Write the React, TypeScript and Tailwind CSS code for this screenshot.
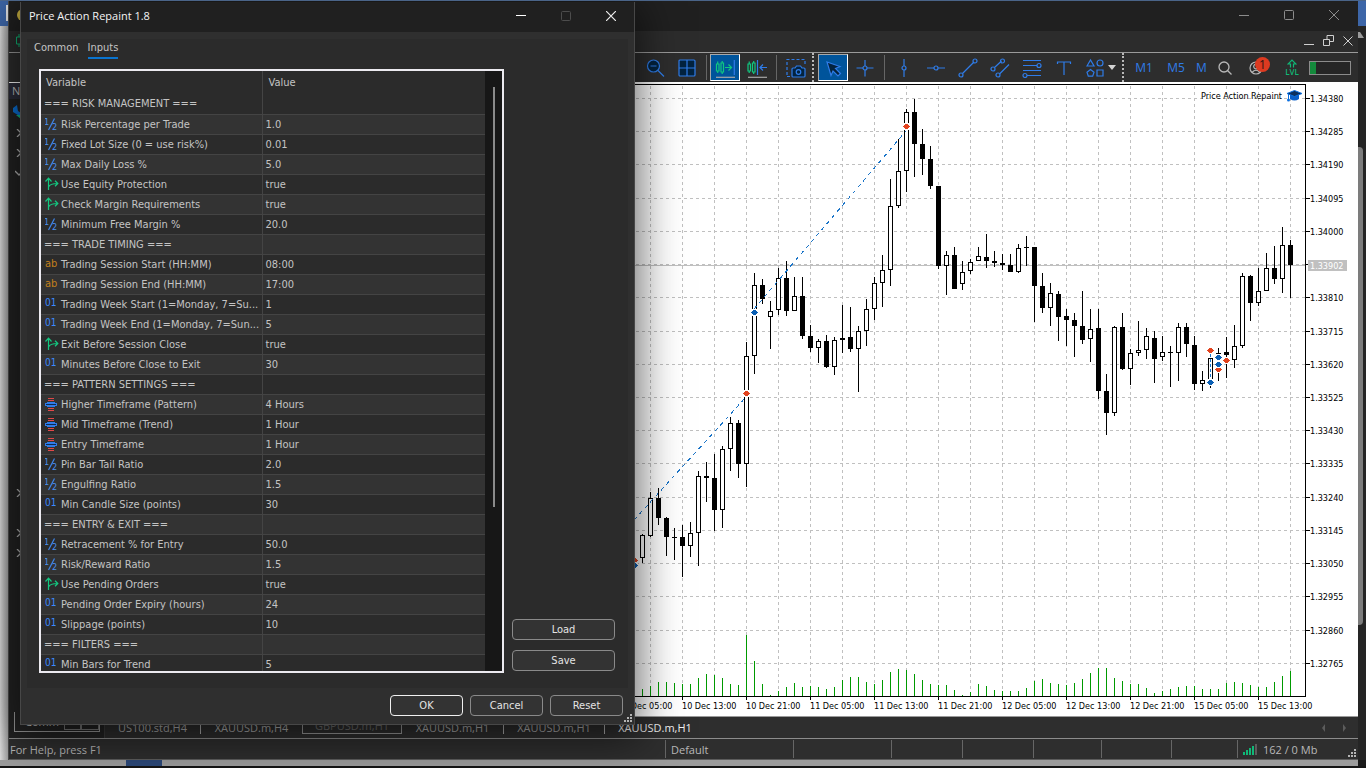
import React from 'react';

type Kind = 'section' | 'double' | 'bool' | 'string' | 'int' | 'enum';

const INPUTS: [Kind, string, string][] = [
  ['section', '=== RISK MANAGEMENT ===', ''],
  ['double', 'Risk Percentage per Trade', '1.0'],
  ['double', 'Fixed Lot Size (0 = use risk%)', '0.01'],
  ['double', 'Max Daily Loss %', '5.0'],
  ['bool', 'Use Equity Protection', 'true'],
  ['bool', 'Check Margin Requirements', 'true'],
  ['double', 'Minimum Free Margin %', '20.0'],
  ['section', '=== TRADE TIMING ===', ''],
  ['string', 'Trading Session Start (HH:MM)', '08:00'],
  ['string', 'Trading Session End (HH:MM)', '17:00'],
  ['int', 'Trading Week Start (1=Monday, 7=Su...', '1'],
  ['int', 'Trading Week End (1=Monday, 7=Sun...', '5'],
  ['bool', 'Exit Before Session Close', 'true'],
  ['int', 'Minutes Before Close to Exit', '30'],
  ['section', '=== PATTERN SETTINGS ===', ''],
  ['enum', 'Higher Timeframe (Pattern)', '4 Hours'],
  ['enum', 'Mid Timeframe (Trend)', '1 Hour'],
  ['enum', 'Entry Timeframe', '1 Hour'],
  ['double', 'Pin Bar Tail Ratio', '2.0'],
  ['double', 'Engulfing Ratio', '1.5'],
  ['int', 'Min Candle Size (points)', '30'],
  ['section', '=== ENTRY & EXIT ===', ''],
  ['double', 'Retracement % for Entry', '50.0'],
  ['double', 'Risk/Reward Ratio', '1.5'],
  ['bool', 'Use Pending Orders', 'true'],
  ['int', 'Pending Order Expiry (hours)', '24'],
  ['int', 'Slippage (points)', '10'],
  ['section', '=== FILTERS ===', ''],
  ['int', 'Min Bars for Trend', '5'],
];

// filled, body top, body bottom, wick top, wick bottom; one bar every 8px from x = 642
const CANDLES: [number, number, number, number, number][] = [
  [0, 535, 558, 534, 563], [0, 498, 536, 492, 537], [1, 498, 518, 488, 525], [1, 518, 537, 517, 556],
  [1, 537, 538, 528, 560], [1, 537, 546, 525, 577], [0, 533, 546, 522, 557], [0, 476, 533, 471, 566],
  [1, 476, 478, 462, 502], [1, 478, 510, 454, 531], [0, 449, 510, 446, 528], [0, 423, 449, 417, 471],
  [1, 423, 464, 420, 478], [0, 356, 464, 342, 487], [0, 285, 356, 273, 374], [1, 285, 299, 279, 304],
  [0, 311, 317, 301, 349], [0, 278, 310, 268, 315], [1, 278, 311, 261, 316], [0, 296, 311, 277, 311],
  [1, 296, 336, 277, 339], [1, 336, 348, 325, 352], [0, 341, 348, 339, 363], [1, 341, 367, 335, 368],
  [0, 340, 367, 337, 375], [0, 338, 340, 305, 353], [1, 337, 349, 307, 352], [0, 331, 349, 326, 392],
  [0, 309, 331, 299, 346], [0, 283, 309, 277, 320], [0, 270, 283, 255, 307], [0, 206, 270, 179, 286],
  [0, 171, 206, 139, 208], [0, 112, 171, 109, 192], [1, 112, 144, 99, 177], [1, 144, 159, 129, 175],
  [1, 159, 186, 146, 189], [1, 186, 266, 186, 269], [0, 255, 266, 251, 295], [1, 255, 289, 247, 289],
  [0, 272, 284, 261, 290], [0, 262, 271, 259, 274], [0, 256, 261, 247, 261], [1, 257, 261, 234, 268],
  [1, 261, 263, 251, 267], [1, 263, 265, 254, 270], [1, 265, 272, 254, 272], [0, 248, 272, 244, 273],
  [1, 247, 248, 236, 266], [1, 247, 286, 247, 322], [1, 286, 308, 273, 313], [0, 293, 308, 283, 326],
  [1, 294, 317, 291, 341], [1, 316, 320, 309, 346], [1, 320, 326, 313, 357], [1, 326, 340, 291, 344],
  [0, 329, 339, 309, 362], [1, 328, 391, 309, 399], [1, 391, 413, 374, 435], [0, 327, 413, 326, 416],
  [1, 327, 369, 313, 370], [0, 353, 369, 349, 385], [0, 350, 353, 321, 356], [0, 336, 350, 328, 359],
  [1, 338, 359, 331, 383], [0, 352, 357, 336, 361], [1, 352, 353, 346, 387], [0, 327, 353, 323, 381],
  [1, 327, 344, 323, 357], [1, 345, 384, 336, 390], [0, 380, 384, 371, 391], [0, 358, 380, 358, 388],
  [1, 353, 355, 348, 381], [1, 352, 355, 337, 378], [0, 346, 360, 325, 368], [0, 276, 346, 273, 348],
  [1, 276, 303, 275, 321], [0, 291, 303, 268, 306], [0, 268, 291, 253, 291], [1, 268, 279, 246, 284],
  [0, 245, 279, 227, 293], [1, 245, 265, 240, 298],
];

// top of each volume bar, from x = 634
const VOLUMES = [
  690, 689, 686, 682, 682, 683, 684, 684, 678, 674, 675, 678, 684, 685, 635, 661, 684, 695, 691, 687, 683,
  687, 686, 687, 689, 687, 680, 677, 677, 682, 684, 680, 672, 669, 670, 674, 680, 684, 685, 685, 690, 695,
  692, 684, 686, 690, 691, 691, 691, 688, 681, 679, 683, 684, 685, 683, 679, 673, 668, 668, 678, 681, 684,
  684, 688, 693, 691, 689, 687, 686, 686, 689, 689, 689, 683, 682, 683, 685, 687, 687, 682, 676, 671,
];

const PRICES: [number, string][] = [
  [98, '1.34380'], [131, '1.34285'], [164, '1.34190'], [198, '1.34095'], [231, '1.34000'], [264, ''],
  [297, '1.33810'], [331, '1.33715'], [364, '1.33620'], [397, '1.33525'], [430, '1.33430'], [463, '1.33335'],
  [497, '1.33240'], [530, '1.33145'], [563, '1.33050'], [596, '1.32955'], [630, '1.32860'], [663, '1.32765'],
];

const DATES = [
  '10 Dec 05:00', '10 Dec 13:00', '10 Dec 21:00', '11 Dec 05:00', '11 Dec 13:00', '11 Dec 21:00',
  '12 Dec 05:00', '12 Dec 13:00', '12 Dec 21:00', '15 Dec 05:00', '15 Dec 13:00',
];

const RED = '#e2431e';
const BLUE = '#0a5fb4';

const DEALS: [number, number, string][] = [
  [634, 560, RED], [634, 565, BLUE], [746, 393, RED], [754, 312, BLUE], [906, 126, RED],
  [1210, 350, RED], [1210, 382, BLUE], [1218, 369, RED], [1218, 364, BLUE], [1218, 357, BLUE], [1226, 360, RED],
];

const Deal: React.FC<{ x: number; y: number; color: string }> = ({ x, y, color }) => (
  <g>
    <rect x={x - 3} y={y - 3} width="7" height="7" fill="#fff" />
    <path
      d={`M${x - 3} ${y}h7v1h-7zM${x - 2} ${y - 1}h5v3h-5zM${x - 1} ${y - 2}h3v5h-3z`}
      fill={color}
    />
  </g>
);

const Chart: React.FC = () => (
  <svg
    width="740"
    height="634"
    viewBox="618 83 740 634"
    className="shrink-0 font-['DejaVu_Sans_Condensed','DejaVu_Sans',sans-serif] text-[9px]"
    shapeRendering="crispEdges"
    role="img"
    aria-label="Price chart"
  >
    <g stroke="#c0c0c0" strokeDasharray="3 3">
      {Array.from({ length: 21 }, (_, i) => 650 + i * 32).map((x) => (
        <line key={x} x1={x + 0.5} x2={x + 0.5} y1="86" y2="696" />
      ))}
      {PRICES.map(([y]) => (
        <line key={y} x1="618" x2="1305" y1={y + 0.5} y2={y + 0.5} />
      ))}
    </g>
    <rect x="618" y="265" width="687" height="1" fill="#c0c0c0" />

    {VOLUMES.map((y, i) => (
      <rect key={i} x={634 + i * 8} y={y} width="1" height={696 - y} fill="#009a00" />
    ))}

    {CANDLES.map(([filled, top, bottom, high, low], i) => {
      const x = 642 + i * 8;
      return (
        <g key={x}>
          <rect x={x} y={high} width="1" height={low - high} />
          <rect x={x - 2} y={top} width="5" height={Math.max(bottom - top, 1)} />
          {!filled && <rect x={x - 1} y={top + 1} width="3" height={Math.max(bottom - top - 2, 0)} fill="#fff" />}
        </g>
      );
    })}
    <rect x="634" y="548" width="1" height="10" />

    <g stroke="#1a74c8" strokeDasharray="4 4" fill="none">
      <path d="M634 520L746 397" />
      <path d="M754 309L906 131" />
    </g>
    <g stroke="#1a74c8" strokeDasharray="3 2" fill="none">
      <path d="M1210.5 354V382" />
      <path d="M1218.5 357V369" />
      <path d="M1218 357L1226 360" />
    </g>
    {DEALS.map(([x, y, color]) => (
      <Deal key={`${x}-${y}`} x={x} y={y} color={color} />
    ))}

    <rect x="618" y="84" width="688" height="1" />
    <rect x="1305" y="84" width="1" height="613" />
    <rect x="618" y="696" width="688" height="1" />

    {PRICES.map(([y, label]) => (
      <g key={y}>
        <rect x="1306" y={y} width="4" height="1" />
        <text x="1310" y={y + 4}>{label}</text>
      </g>
    ))}
    <rect x="1308" y="260" width="39" height="11" fill="#c0c0c0" />
    <text x="1310" y="269" fill="#fff">1.33902</text>

    {DATES.map((label, i) => (
      <g key={label}>
        <rect x={618 + i * 64} y="697" width="1" height="3" />
        <text x={618 + i * 64} y="709">{label}</text>
      </g>
    ))}

    <text x="1282" y="99" textAnchor="end">Price Action Repaint</text>
    <g shapeRendering="auto">
      <path d="M1290 95v4q4.500 3 9 0v-4z" fill="#0a5fc8" />
      <path d="M1287 93.500L1294.500 90.500L1302 93.500L1294.500 96.500z" fill="#0b2f5c" stroke="#0b6fe0" />
      <path d="M1288.500 94v6" stroke="#0b6fe0" />
      <circle cx="1288.500" cy="100" r="1.500" fill="#0b6fe0" />
    </g>
  </svg>
);

const KindIcon: React.FC<{ kind: Kind }> = ({ kind }) => {
  switch (kind) {
    case 'double':
      return (
        <svg width="14" height="15" viewBox="0 0 14 15" fill="#4a90f0" className="text-[9px]">
          <text x="-1" y="8">1</text>
          <path d="M9.500 1.500L3.500 13" stroke="#3f86ea" strokeWidth="1.2" />
          <text x="7" y="13">2</text>
        </svg>
      );
    case 'int':
      return <span className="pb-0.5 text-[10px] text-[#3b8aff]">01</span>;
    case 'string':
      return <span className="pb-0.5 text-[11px] text-[#c07f1c]">ab</span>;
    case 'bool':
      return (
        <svg width="14" height="15" viewBox="0 0 14 15" fill="none" stroke="#14c880" strokeWidth="1.2">
          <path d="M3.500 13V1.500M.5 4.500L3.500 1.200L6.500 4.500M3.500 10Q5 6.500 12.500 6.500M10 3.800L12.800 6.500L10 9.200" />
        </svg>
      );
    case 'enum':
      return (
        <svg width="12" height="13" viewBox="0 0 12 13" shapeRendering="crispEdges">
          <path d="M3 0h6v1H3zM3 2h6v1H3zM3 10h6v1H3zM3 12h6v1H3z" fill="#e04848" />
          <path d="M2 4h8v1H2zM0 5h12v3H0zM2 8h8v1H2z" fill="#2f7ce8" />
          <path d="M1 6h10v1H1z" fill="#10294f" />
        </svg>
      );
    default:
      return null;
  }
};

const DialogButton: React.FC<{ label: string; primary?: boolean }> = ({ label, primary }) => (
  <button
    type="button"
    className={`h-[21px] w-full rounded border bg-[#333333] text-[11px] leading-none text-[#e4e4e4] ${primary ? 'border-[#f0f0f0]' : 'border-[#8a8a8a]'}`}
  >
    {label}
  </button>
);

const Grip: React.FC = () => (
  <svg width="8" height="8" viewBox="0 0 8 8" fill="#b4b4b4" shapeRendering="crispEdges">
    <path d="M6 0h2v2H6zM3 3h2v2H3zM6 3h2v2H6zM0 6h2v2H0zM3 6h2v2H3zM6 6h2v2H6z" />
  </svg>
);

const InputsDialog: React.FC = () => (
  <div
    role="dialog"
    aria-label="Price Action Repaint 1.8"
    className="absolute top-px bottom-[43px] left-[20px] flex w-[615px] flex-col border border-[#474747] border-t-0 bg-[#2f2f2f] font-['DejaVu_Sans_Condensed','DejaVu_Sans',sans-serif] text-[11px] text-[#c4c4c4] shadow-[0_8px_40px_4px_rgba(0,0,0,0.6)]"
  >
    <header className="flex h-[30px] shrink-0 items-center bg-[#202020] pb-0.5 pl-2 font-['Open_Sans',sans-serif] text-[11px] text-[#f4f4f4]">
      <h1 className="flex-1">Price Action Repaint 1.8</h1>
      <button type="button" aria-label="Minimize" className="flex w-[45px] justify-center">
        <svg width="10" height="10" viewBox="0 0 10 10" stroke="#fff"><path d="M0 4.500h10" /></svg>
      </button>
      <button type="button" aria-label="Maximize" disabled className="flex w-[45px] justify-center">
        <svg width="10" height="10" viewBox="0 0 10 10" stroke="#4c4c4c" fill="none"><rect x=".5" y=".5" width="9" height="9" rx="1" /></svg>
      </button>
      <button type="button" aria-label="Close" className="flex w-[46px] justify-center">
        <svg width="10" height="10" viewBox="0 0 10 10" stroke="#eee" strokeWidth="1.2"><path d="M0 0l10 10M10 0L0 10" /></svg>
      </button>
    </header>

    <div className="mx-1.5 mt-[7px] flex min-h-0 flex-1 flex-col bg-[#2b2b2b] pb-[15px]">
      <nav className="flex h-[30px] shrink-0 items-start gap-[9px] pl-[7px]">
        <button type="button" className="h-[18px]">Common</button>
        <button type="button" className="h-5 border-b-2 border-[#0a74cf]">Inputs</button>
      </nav>
      <div className="flex min-h-0 flex-1 gap-2 pr-[13px] pl-3">
        <div className="flex min-w-0 flex-1 overflow-hidden border-2 border-[#eceaf0]">
          <table className="h-min w-full table-fixed border-collapse">
            <thead>
              <tr className="h-[23px] text-left">
                <th className="w-[221px] border-r border-[#444444] pt-0.5 pl-[5px] font-normal">Variable</th>
                <th className="pt-0.5 pl-1.5 font-normal">Value</th>
              </tr>
            </thead>
            <tbody>
              {INPUTS.map(([kind, name, value]) => (
                <tr key={name} className="h-5 border-b border-[#444444] odd:bg-[#2b2b2b] even:bg-[#333333]">
                  <td className="border-r border-[#444444] p-0">
                    <div className="flex h-[19px] items-center overflow-hidden pl-[3px] leading-none whitespace-nowrap">
                      {kind !== 'section' && (
                        <span className="flex w-[17px] shrink-0 items-center pl-px leading-none"><KindIcon kind={kind} /></span>
                      )}
                      {name}
                    </div>
                  </td>
                  <td className="p-0">
                    <div className="flex h-[19px] items-center pl-[3px] leading-none">{value}</div>
                  </td>
                </tr>
              ))}
            </tbody>
          </table>
          <div className="flex w-[17px] shrink-0 justify-center bg-[#171717] pt-4">
            <div className="h-[72%] w-0.5 bg-[#8a8a8a]" />
          </div>
        </div>
        <div className="flex w-[103px] flex-col justify-end gap-2.5 pb-0.5">
          <DialogButton label="Load" />
          <DialogButton label="Save" />
        </div>
      </div>
    </div>

    <footer className="flex h-9 shrink-0 justify-end gap-[7px] pt-[7px]">
      <div className="w-[73px]"><DialogButton label="OK" primary /></div>
      <div className="w-[73px]"><DialogButton label="Cancel" /></div>
      <div className="w-[73px]"><DialogButton label="Reset" /></div>
      <div className="-ml-1.5 flex w-2.5 items-end pb-0.5"><Grip /></div>
    </footer>
  </div>
);

const Tool: React.FC<{ label: string; active?: boolean; children: React.ReactNode }> = ({ label, active, children }) => (
  <button
    type="button"
    aria-label={label}
    className={`flex h-[27px] shrink-0 items-center justify-center ${active ? 'w-[30px] border border-t-[#a8a8a8] border-r-white border-b-white border-l-[#a8a8a8] bg-[#00549b]' : 'w-8'}`}
  >
    <svg width="20" height="20" viewBox="0 0 20 20" fill="none" stroke="#2f7ce8" strokeWidth="1.2">
      {children}
    </svg>
  </button>
);

const Divider: React.FC = () => <span className="mx-[3px] h-[25px] w-px shrink-0 bg-[#666666]" />;
const Dots: React.FC = () => <span className="h-full shrink-0 border-l-2 border-dotted border-[#b8b8b8]" />;

const Toolbar: React.FC = () => (
  <div className="flex h-[31px] shrink-0 items-center justify-end overflow-hidden border-t border-b border-t-[#9a9a9a] border-b-white bg-[#2d2d2d] pr-[7px] font-['Open_Sans',sans-serif] text-xs text-[#2f7ce8]">
    <Tool label="Zoom out">
      <circle cx="8.500" cy="8" r="6" fill="#03233f" />
      <path d="M5.500 8h6M13 12.500l6 6" />
    </Tool>
    <Tool label="Tile windows">
      <rect x="2" y="2" width="16" height="16" rx="1" fill="#03233f" />
      <path d="M10 2v16M2 10h16" />
    </Tool>
    <Divider />
    <Tool label="Auto scroll" active>
      <path d="M1.500 6h2.500v7H1.500zM2.700 3.500V6M2.700 13v2M6 5h2.500v9H6zM7.200 3v2M7.200 14v2M10 9.500h6.500M13.500 6.500l3 3-3 3" stroke="#10c880" />
      <path d="M19.300 2v15" />
      <path d="M1 19.300h19" stroke="#a8a8a8" />
    </Tool>
    <span className="w-px shrink-0" />
    <Tool label="Chart shift">
      <path d="M1 6h2.500v7H1zM2.200 3.500V6M2.200 13v2M5.500 5H8v9H5.500zM6.700 3v2M6.700 14v2" stroke="#10c880" />
      <path d="M10.500 2v15M20 9.500h-7M16 6.500l-3 3 3 3" />
      <path d="M1 19.300h19" stroke="#a8a8a8" />
    </Tool>
    <Divider />
    <Tool label="Screenshot">
      <path d="M1 17V1.500h18V8M1 18.500h4" strokeDasharray="3 2" />
      <path d="M6 11q0-1 1-1h2l1.500-2h4L16 10h2q1 0 1 1v7q0 1-1 1H7q-1 0-1-1z" fill="#03233f" />
      <circle cx="12.500" cy="14" r="2.300" />
    </Tool>
    <Dots />
    <span className="w-1 shrink-0" />
    <Tool label="Cursor" active>
      <path d="M4 4l13 4.500-4.500 2 5 5-2.500 2.500-5-5-2 4.500z" fill="#03233f" />
    </Tool>
    <span className="w-px shrink-0" />
    <Tool label="Crosshair">
      <path d="M10 2v6M10 12v6.500M1.500 10H8M12 10h6.500" />
      <circle cx="10" cy="10" r="2" />
    </Tool>
    <Divider />
    <Tool label="Vertical line">
      <path d="M10 1v7M10 12v7" />
      <circle cx="10" cy="10" r="2" />
    </Tool>
    <Tool label="Horizontal line">
      <path d="M1 10h7M12 10h7" />
      <circle cx="10" cy="10" r="2" />
    </Tool>
    <Tool label="Trendline">
      <path d="M4.500 15.500l11-11" />
      <circle cx="3" cy="17" r="2" />
      <circle cx="17" cy="3" r="2" />
    </Tool>
    <Tool label="Channel">
      <path d="M4.500 9.500l7-6.500M9.500 16L19 6.500" />
      <circle cx="3" cy="11" r="2" />
      <circle cx="12.500" cy="3" r="2" />
      <circle cx="8" cy="17" r="2" />
    </Tool>
    <Tool label="Fibonacci">
      <path d="M1 2.500h18M1 7.500h14M1 12.500h18M5 17.500h14" />
      <circle cx="17" cy="7.500" r="2" />
      <circle cx="3" cy="17.500" r="2" />
    </Tool>
    <Tool label="Text"><path d="M3.500 6V4h13v2M10 4v13" /></Tool>
    <Tool label="Shapes">
      <path d="M1 8l3.500-6L8 8z" />
      <circle cx="14" cy="5" r="3" />
      <path d="M4.500 11.500l3.500 2.700-1.300 4H2.300L1 14.200zM11 12h6v6h-6z" />
    </Tool>
    <svg width="8" height="5" viewBox="0 0 8 5" fill="#d4d4d4" className="-ml-1 shrink-0"><path d="M0 0h8L4 5z" /></svg>
    <span className="w-1.5 shrink-0" />
    <Dots />
    <span className="w-1 shrink-0" />
    <button type="button" className="w-8 shrink-0">M1</button>
    <button type="button" className="w-8 shrink-0">M5</button>
    <button type="button" className="w-4 shrink-0 pl-1 text-left">M</button>
    <button type="button" aria-label="Search" className="flex w-[37px] shrink-0 justify-center pr-1 text-[#b8b8b8]">
      <svg width="14" height="14" viewBox="0 0 14 14" fill="none" stroke="currentColor" strokeWidth="1.3">
        <circle cx="6" cy="6" r="5" />
        <path d="M9.500 9.500l4 4" />
      </svg>
    </button>
    <button type="button" aria-label="Account, 1 notification" className="relative flex w-[30px] shrink-0 justify-start pl-1 text-[#b8b8b8]">
      <svg width="14" height="14" viewBox="0 0 14 14" fill="none" stroke="currentColor" strokeWidth="1.2">
        <circle cx="7" cy="7" r="6" />
        <circle cx="7" cy="5.500" r="2.300" />
        <path d="M3 11.500q4-4.500 8 0" />
      </svg>
      <span className="absolute -top-1 left-[10px] h-[15px] w-[15px] rounded-full bg-[#dd3a20] text-center text-xs leading-[15px] text-[#2b1512]">1</span>
    </button>
    <div className="flex w-[34px] shrink-0 flex-col items-center text-[8px] leading-[8px] font-semibold text-[#10b877]">
      <svg width="10" height="9" viewBox="0 0 10 9" fill="none" stroke="#10b877" strokeWidth="1.2">
        <path d="M3.500 8.500V5H1l4-4 4 4H6.500v3.500" />
      </svg>
      LVL
    </div>
    <div className="h-3.5 w-[42px] shrink-0 border border-[#8c8c8c] bg-[#262626]">
      <div className="h-full w-1.5 bg-[#148a3c]" />
    </div>
  </div>
);

const Chevron: React.FC<{ open?: boolean }> = ({ open }) => (
  <svg width="8" height="8" viewBox="0 0 8 8" fill="none" stroke="#b8b8b8" strokeWidth="1.3" className="my-1.5 shrink-0">
    <path d={open ? 'M0 2l4 4 4-4' : 'M2 0l4 4-4 4'} />
  </svg>
);

const Navigator: React.FC = () => (
  <aside className="flex w-24 shrink-0 flex-col border-r border-[#3c3c3c] bg-[#232323] font-['Open_Sans',sans-serif] text-[11px] text-[#c4c4c4]">
    <div className="h-4 shrink-0 bg-[#2c2d3a] pl-[3px] leading-4">N</div>
    <svg width="16" height="16" viewBox="0 0 16 16" className="mt-1.5 ml-1 shrink-0">
      <path d="M4 0L0 3v4l8 5V8l-3-2z" fill="#0b72d8" />
      <path d="M3 10l5 4h4v-4z" fill="#12b883" />
    </svg>
    <div className="flex shrink-0 flex-col pt-0.5 pl-1.5">
      <Chevron />
      <Chevron />
      <Chevron open />
    </div>
    <div className="flex flex-1 flex-col pt-[300px] pl-1.5">
      <Chevron />
      <div className="h-5" />
      <Chevron />
      <Chevron />
    </div>
    <div className="mb-1.5 ml-[5px] flex h-5 w-[86px] shrink-0 items-start border border-t-0 border-[#9a9a9a] pl-2.5 leading-none">
      <span className="w-10 pt-1">Comm</span>
      <span className="h-[18px] w-[18px] border border-[#7a7a7a]" />
      <span className="h-[18px] w-[18px] border border-[#7a7a7a]" />
    </div>
  </aside>
);

const Terminal: React.FC = () => (
  <div className="flex min-w-0 flex-1 flex-col border-l border-[#4c4c4c] bg-[#2d2d2d]">
    <header className="flex h-[30px] shrink-0 items-center justify-end bg-[#202020] pr-px pb-0.5 text-[#8c8c8c]">
      <span className="mr-auto ml-2 h-3 w-3 rounded-full bg-[#c8b040]" />
      <button type="button" aria-label="Minimize" className="flex w-[45px] justify-center">
        <svg width="10" height="10" viewBox="0 0 10 10" stroke="currentColor"><path d="M0 5.500h10" /></svg>
      </button>
      <button type="button" aria-label="Maximize" className="flex w-[45px] justify-center">
        <svg width="10" height="10" viewBox="0 0 10 10" stroke="currentColor" fill="none"><rect x=".5" y=".5" width="9" height="9" rx="1" /></svg>
      </button>
      <button type="button" aria-label="Close" className="flex w-[46px] justify-center">
        <svg width="10" height="10" viewBox="0 0 10 10" stroke="currentColor"><path d="M0 0l10 10M10 0L0 10" /></svg>
      </button>
    </header>

    <div className="flex h-[21px] shrink-0 items-center justify-end gap-[9px] bg-[#2c2c2c] pr-[5px] pb-0.5 text-[#d0d0d0]">
      <svg width="6" height="13" viewBox="0 0 6 13" fill="none" stroke="#10b877" className="mr-auto ml-[7px]">
        <path d="M.5 3h5v7h-5zM3 0v3M3 10v3" />
      </svg>
      <button type="button" aria-label="Minimize chart">
        <svg width="10" height="10" viewBox="0 0 10 10" stroke="currentColor"><path d="M0 8.500h10" /></svg>
      </button>
      <button type="button" aria-label="Restore chart">
        <svg width="11" height="11" viewBox="0 0 11 11" stroke="currentColor" fill="none"><path d="M.5 4.500h6v6h-6zM4 4.500v-4h6.500v6H6.500" /></svg>
      </button>
      <button type="button" aria-label="Close chart">
        <svg width="10" height="10" viewBox="0 0 10 10" stroke="currentColor"><path d="M.5 .5l9 9M9.500 .5l-9 9" /></svg>
      </button>
    </div>

    <Toolbar />

    <div className="flex min-h-0 flex-1">
      <Navigator />
      <div className="flex min-w-0 flex-1 flex-col">
        <div className="flex min-h-0 flex-1 justify-end overflow-hidden border-b border-[#9a9a9a] bg-white">
          <Chart />
        </div>
        <nav className="flex h-[21px] shrink-0 items-center bg-[#2e2e2e] pr-3 font-['Open_Sans',sans-serif] text-[11px] leading-none text-[#b0b0b0]">
          <button type="button" className="w-[95px]">US100.std,H4</button>
          <span className="h-3 w-px bg-[#b0b0b0]" />
          <button type="button" className="w-[101px]">XAUUSD.m,H4</button>
          <button type="button" className="mb-1 h-[17px] w-[100px] border border-t-0 border-[#9a9a9a] text-[#707070]">GBPUSD.m,H1</button>
          <button type="button" className="w-[101px]">XAUUSD.m,H1</button>
          <span className="h-3 w-px bg-[#b0b0b0]" />
          <button type="button" className="w-[100px]">XAUUSD.m,H1</button>
          <span className="h-3 w-px bg-[#b0b0b0]" />
          <button type="button" className="mr-auto w-[100px] text-[#f0f0f0]">XAUUSD.m,H1</button>
          <svg width="24" height="8" viewBox="0 0 24 8" fill="#5c5c5c"><path d="M3 0v8L0 4zM21 0v8l3-4z" /></svg>
        </nav>
      </div>
    </div>

    <footer className="flex h-[22px] shrink-0 items-center border-t border-b border-t-[#8c8c8c] border-b-[#5c5c5c] bg-[#2e2e2e] font-['Open_Sans',sans-serif] text-[11px] leading-none text-[#b8b8b8]">
      <span className="min-w-0 flex-1 pl-px">For Help, press F1</span>
      <span className="flex h-[18px] w-32 items-center border-l border-[#666666] pl-[5px]">Default</span>
      <span className="h-[18px] w-[98px] border-l border-[#666666]" />
      <span className="h-[18px] w-[71px] border-l border-[#666666]" />
      <span className="h-[18px] w-[71px] border-l border-[#666666]" />
      <span className="h-[18px] w-[68px] border-l border-[#666666]" />
      <span className="h-[18px] w-[70px] border-l border-[#666666]" />
      <span className="h-[18px] w-[66px] border-l border-[#666666]" />
      <span className="flex h-[18px] w-[121px] items-center gap-1.5 border-l border-[#666666] pl-[5px]">
        <svg width="14" height="12" viewBox="0 0 14 12" fill="#10b877" shapeRendering="crispEdges">
          <path d="M0 9h2v3H0zM3 7h2v5H3zM6 5h2v7H6zM9 3h2v9H9z" />
          <path d="M12 1h2v11h-2z" fill="#5c5c5c" />
        </svg>
        162 / 0 Mb
        <span className="mt-2 mr-0.5 ml-auto"><Grip /></span>
      </span>
    </footer>
  </div>
);

const App: React.FC = () => (
  <div className="relative flex h-screen flex-col overflow-hidden border-t border-[#4a6488] bg-[#1a1a1a]">
    <div className="flex min-h-0 flex-1">
      <div className="flex w-2 shrink-0 flex-col bg-linear-to-r from-[#dcdcdc] to-[#a0a0a0]">
        <div className="flex h-[25px] justify-end bg-[#3d66a8] pt-1"><span className="h-4 w-0.5 bg-[#e4e4e4]" /></div>
      </div>
      <Terminal />
      <div className="flex w-2 shrink-0 flex-col bg-[#252525]">
        <div className="h-[25px] bg-[#3d66a8]" />
        <svg width="6" height="6" viewBox="0 0 6 6" fill="#9a9a9a" className="mt-1.5"><path d="M0 6V0h2l4 6z" /></svg>
        <div className="mt-[109px] mb-[135px] w-[5px] flex-1 rounded-r bg-[#7c7c7c]" />
      </div>
    </div>
    <div className="mr-2 flex h-1.5 shrink-0 bg-[#9c9c9c] pl-[126px]">
      <span className="w-9 bg-[#2c4878]" />
    </div>
    <div className="h-0.5 shrink-0 bg-[#151515]" />
    <InputsDialog />
  </div>
);

export default App;
